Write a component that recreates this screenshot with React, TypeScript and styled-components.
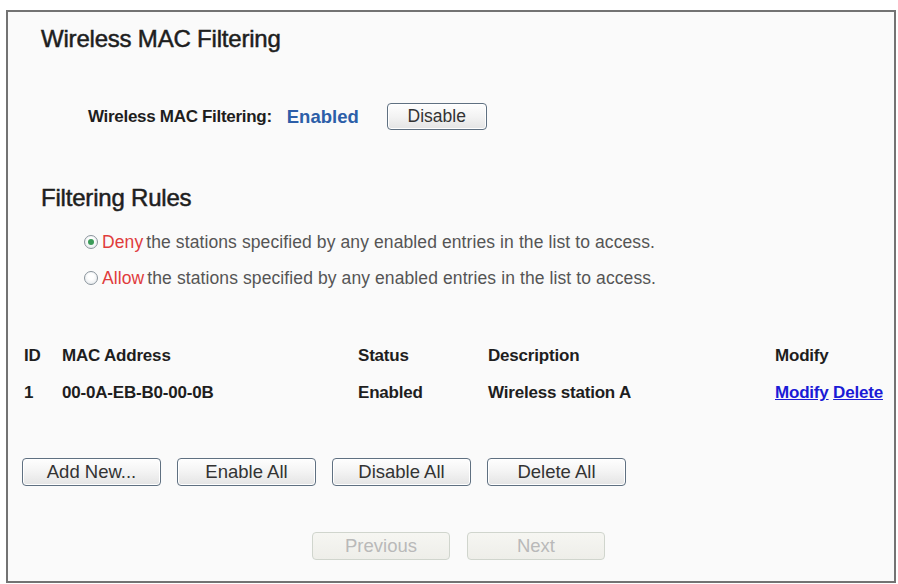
import React from "react";
import styled, { createGlobalStyle } from "styled-components";

const Global = createGlobalStyle`
  html, body { margin: 0; padding: 0; background: #ffffff; }
  body { font-family: "Liberation Sans", Arial, Helvetica, sans-serif; color: #1e1e1e; }
`;

const Page = styled.div`
  padding: 10px 2px 1px 6px;
`;

const Panel = styled.div`
  box-sizing: border-box;
  width: 890px;
  height: 573px;
  border: 2px solid #737373;
  background: #fafafa;
  display: flex;
  flex-direction: column;
`;

const Heading = styled.h2<{ $top: number }>`
  margin: ${(p) => p.$top}px 0 0 33px;
  font-size: 24px;
  line-height: 28px;
  font-weight: normal;
  letter-spacing: -0.2px;
  color: #1e1e1e;
  -webkit-text-stroke: 0.5px #1e1e1e;
`;

const StatusRow = styled.div`
  margin-top: 50px;
  padding-left: 80px;
  height: 27px;
  display: flex;
  align-items: center;
`;

const Label = styled.span`
  font-size: 17px;
  font-weight: bold;
  letter-spacing: -0.3px;
  color: #1e1e1e;
`;

const StateValue = styled.span`
  margin-left: 15px;
  font-size: 18.5px;
  font-weight: bold;
  color: #2c5ea8;
`;

const Button = styled.button<{ $w: number; $h?: number; $fs?: number; $ml?: number }>`
  box-sizing: border-box;
  width: ${(p) => p.$w}px;
  height: ${(p) => p.$h ?? 28}px;
  margin-left: ${(p) => p.$ml ?? 0}px;
  padding: 0;
  border: 1.5px solid #5f7081;
  border-radius: 4px;
  background: linear-gradient(#fefefe, #f3f3f3 50%, #e4e4e4);
  box-shadow: inset 0 0 0 1px #ffffff;
  font-family: "Liberation Sans", Arial, sans-serif;
  font-size: ${(p) => p.$fs ?? 18.5}px;
  color: #333333;
  cursor: pointer;

  &:disabled {
    border-color: #d0d5cd;
    background: linear-gradient(#f6f6f2, #eeeee9);
    box-shadow: none;
    color: #b9b9b9;
    cursor: default;
  }
`;

const RadioList = styled.div`
  margin-top: 19px;
  padding-left: 76px;
  display: flex;
  flex-direction: column;
  gap: 14px;
`;

const RadioRow = styled.label`
  height: 22px;
  display: flex;
  align-items: center;
  font-size: 17.5px;
  letter-spacing: 0.1px;
  color: #555555;
`;

const RadioMark = styled.span<{ $checked?: boolean }>`
  position: relative;
  box-sizing: border-box;
  width: 14px;
  height: 14px;
  margin-right: 4px;
  border-radius: 50%;
  border: 1.5px solid #8a949c;
  background: radial-gradient(circle at 50% 40%, #ffffff 30%, #dde2e6 100%);
  flex: none;

  &::after {
    content: "";
    display: ${(p) => (p.$checked ? "block" : "none")};
    position: absolute;
    left: 2.5px;
    top: 2.5px;
    width: 6px;
    height: 6px;
    border-radius: 50%;
    background: #3b9b58;
  }
`;

const Keyword = styled.span`
  color: #e03c3c;
  margin-right: 3px;
`;

const Table = styled.div`
  margin-top: 57px;
  padding-left: 16px;
  display: grid;
  grid-template-columns: 38px 296px 130px 287px auto;
  row-gap: 17px;
  font-size: 17px;
  line-height: 20px;
  font-weight: bold;
  letter-spacing: -0.2px;
  color: #1e1e1e;
`;

const Cell = styled.div`
  white-space: nowrap;
`;

const LinkText = styled.a`
  color: #1b1bd6;
  text-decoration: underline;
  cursor: pointer;
`;

const ActionRow = styled.div`
  margin-top: 55px;
  padding-left: 14px;
  display: flex;
  gap: 16px;
`;

const NavRow = styled.div`
  margin-top: 46px;
  padding-left: 15px;
  display: flex;
  justify-content: center;
  gap: 17px;
`;

export default function App() {
  return (
    <Page>
      <Global />
      <Panel>
        <Heading $top={13}>Wireless MAC Filtering</Heading>
        <StatusRow>
          <Label>Wireless MAC Filtering:</Label>
          <StateValue>Enabled</StateValue>
          <Button $w={100} $h={27} $fs={17.5} $ml={28}>
            Disable
          </Button>
        </StatusRow>

        <Heading $top={54}>Filtering Rules</Heading>
        <RadioList>
          <RadioRow>
            <RadioMark $checked />
            <Keyword>Deny</Keyword>
            the stations specified by any enabled entries in the list to access.
          </RadioRow>
          <RadioRow>
            <RadioMark />
            <Keyword>Allow</Keyword>
            the stations specified by any enabled entries in the list to access.
          </RadioRow>
        </RadioList>

        <Table>
          <Cell>ID</Cell>
          <Cell>MAC Address</Cell>
          <Cell>Status</Cell>
          <Cell>Description</Cell>
          <Cell>Modify</Cell>
          <Cell>1</Cell>
          <Cell>00-0A-EB-B0-00-0B</Cell>
          <Cell>Enabled</Cell>
          <Cell>Wireless station A</Cell>
          <Cell>
            <LinkText>Modify</LinkText> <LinkText>Delete</LinkText>
          </Cell>
        </Table>

        <ActionRow>
          <Button $w={139}>Add New...</Button>
          <Button $w={139}>Enable All</Button>
          <Button $w={139}>Disable All</Button>
          <Button $w={139}>Delete All</Button>
        </ActionRow>

        <NavRow>
          <Button $w={138} disabled>
            Previous
          </Button>
          <Button $w={138} disabled>
            Next
          </Button>
        </NavRow>
      </Panel>
    </Page>
  );
}
